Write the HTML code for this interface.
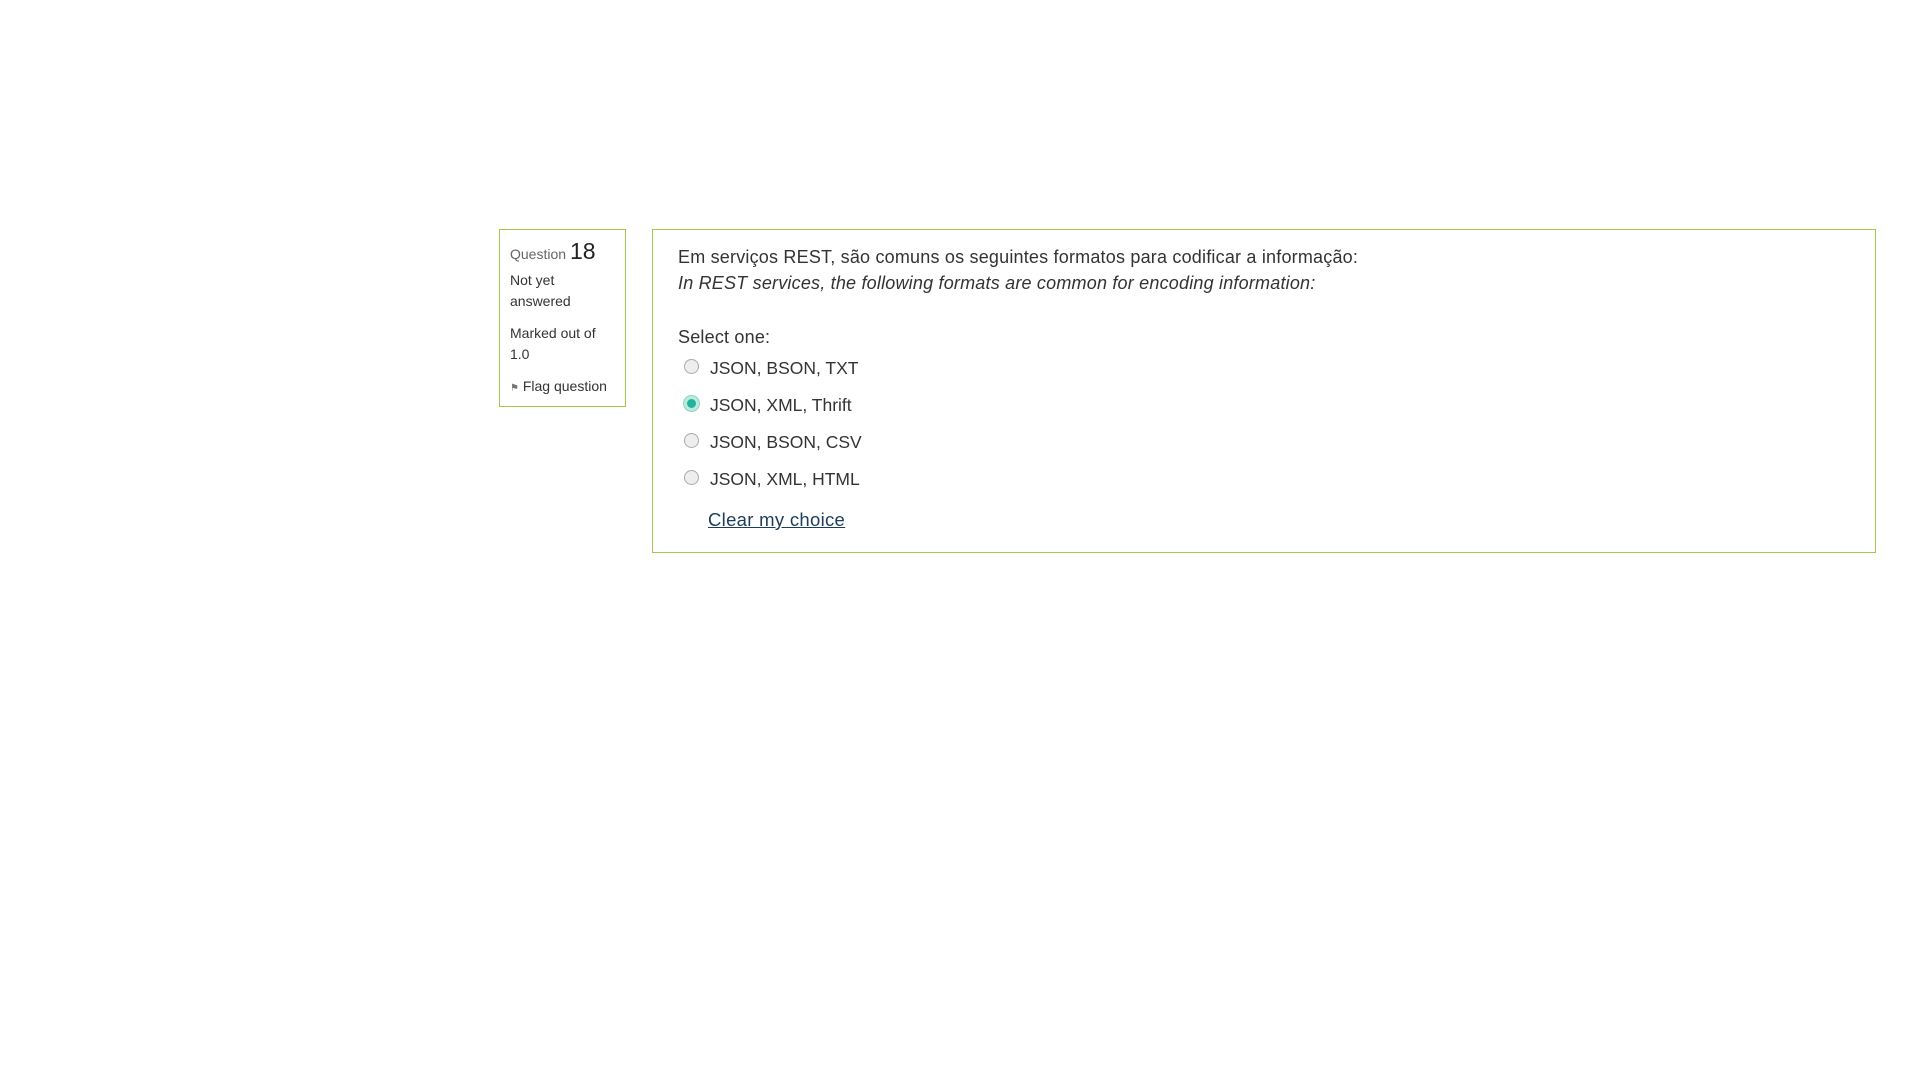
<!DOCTYPE html>
<html><head><meta charset="utf-8">
<style>
html,body{margin:0;padding:0;background:#fff;width:1920px;height:1080px;overflow:hidden;font-family:"Liberation Sans",sans-serif;color:#333;}
.info{position:absolute;left:499px;top:229px;width:127px;height:178px;border:1px solid #a3c74a;box-sizing:border-box;}
.info .t{position:absolute;left:10px;top:8px;font-size:14px;color:#666;white-space:nowrap}
.info .t b{font-weight:normal;font-size:23px;color:#222;}
.info .s{position:absolute;left:10px;font-size:14px;line-height:21px;color:#333;}
.main{position:absolute;left:652px;top:229px;width:1224px;height:324px;border:1px solid #a3c74a;box-sizing:border-box;}
.p{position:absolute;left:25px;font-size:18px;white-space:nowrap;color:#333;letter-spacing:0.2px}
.radio{position:absolute;left:31px;width:15px;height:15px;border-radius:50%;border:1px solid #aaa;background:#eee;box-sizing:border-box;}
.radio.on{background:#20b59a;border:3px solid #bfe8de;box-shadow:0 0 0 1px #8ad3c3;}
.opt{position:absolute;left:57px;font-size:17.5px;white-space:nowrap;color:#333}
a{position:absolute;left:55px;font-size:18.5px;color:#1c3c5a;text-decoration:underline;white-space:nowrap;letter-spacing:0.3px}
</style></head><body>
<div class="info">
<div class="t">Question <b>18</b></div>
<div class="s" style="top:40px">Not yet<br>answered</div>
<div class="s" style="top:93px">Marked out of<br>1.0</div>
<div class="s" style="top:146px;white-space:nowrap"><span style="font-size:10px;color:#777;">&#9873;</span> Flag question</div>
</div>
<div class="main">
<div class="p" style="top:17px">Em serviços REST, são comuns os seguintes formatos para codificar a informação:</div>
<div class="p" style="top:43px;font-style:italic">In REST services, the following formats are common for encoding information:</div>
<div class="p" style="top:97px">Select one:</div>
<div class="radio" style="top:129px"></div><div class="opt" style="top:128px">JSON, BSON, TXT</div>
<div class="radio on" style="top:166px"></div><div class="opt" style="top:165px">JSON, XML, Thrift</div>
<div class="radio" style="top:203px"></div><div class="opt" style="top:202px">JSON, BSON, CSV</div>
<div class="radio" style="top:240px"></div><div class="opt" style="top:239px">JSON, XML, HTML</div>
<a style="top:279px">Clear my choice</a>
</div>
</body></html>
